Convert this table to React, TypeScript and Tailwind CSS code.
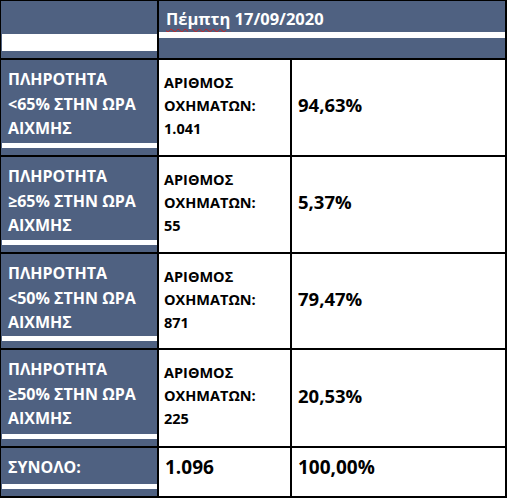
import React from 'react';

type Row = {
  label: string[];
  count: string;
  pct: string;
  h: string;
};

const rows: Row[] = [
  { label: ['ΠΛΗΡΟΤΗΤΑ', '<65% ΣΤΗΝ ΩΡΑ', 'ΑΙΧΜΗΣ'], count: '1.041', pct: '94,63%', h: 'h-[97px]' },
  { label: ['ΠΛΗΡΟΤΗΤΑ', '≥65% ΣΤΗΝ ΩΡΑ', 'ΑΙΧΜΗΣ'], count: '55', pct: '5,37%', h: 'h-[97px]' },
  { label: ['ΠΛΗΡΟΤΗΤΑ', '<50% ΣΤΗΝ ΩΡΑ', 'ΑΙΧΜΗΣ'], count: '871', pct: '79,47%', h: 'h-[96px]' },
  { label: ['ΠΛΗΡΟΤΗΤΑ', '≥50% ΣΤΗΝ ΩΡΑ', 'ΑΙΧΜΗΣ'], count: '225', pct: '20,53%', h: 'h-[98px]' },
];

function LabelCell({ children }: { children: React.ReactNode }) {
  return (
    <div className="w-[158px] border-r-2 border-black flex flex-col bg-[#4f6181]">
      <div className="flex-1 pl-[7px] pt-[7px] text-white font-bold text-[16px] leading-[24.5px]">{children}</div>
      <div className="pl-[1px]">
        <div className="h-[5px] bg-white" />
      </div>
      <div className="h-[7px]" />
    </div>
  );
}

export default function App() {
  return (
    <div className="w-[508px] h-[498px] bg-white font-['Open_Sans',sans-serif]">
      <div className="w-[507px] border-l border-t border-r-2 border-b-2 border-black flex flex-col">
        {/* header */}
        <div className="h-[59px] flex border-b-2 border-black">
          <div className="w-[158px] border-r-2 border-black flex flex-col bg-[#4f6181]">
            <div className="h-[33px]" />
            <div className="pl-[1px]">
              <div className="h-[17px] bg-white" />
            </div>
            <div className="h-[7px]" />
          </div>
          <div className="flex-1 flex flex-col">
            <div className="h-[31px] bg-[#4f6181] pl-[7px] pt-[8px] text-white font-bold text-[16.5px] leading-[20px]">
              <span className="underline decoration-wavy decoration-[#d02020] decoration-1 underline-offset-[3px]">Πέμπτη</span> 17/09/2020
            </div>
            <div className="h-[6px] bg-white" />
            <div className="flex-1 bg-[#4f6181]" />
          </div>
        </div>

        {rows.map((r) => (
          <div key={r.pct} className={`${r.h} flex border-b-2 border-black`}>
            <LabelCell>
              {r.label.map((l) => (
                <div key={l}>{l}</div>
              ))}
            </LabelCell>
            <div className="w-[133px] border-r-2 border-black pl-[5px] pt-[11px] text-black font-bold text-[14.5px] leading-[23px]">
              <div>ΑΡΙΘΜΟΣ</div>
              <div>ΟΧΗΜΑΤΩΝ:</div>
              <div>{r.count}</div>
            </div>
            <div className="flex-1 flex items-center pl-[6px] pb-[5px] text-black font-bold text-[18.5px]">{r.pct}</div>
          </div>
        ))}

        {/* total */}
        <div className="h-[48px] flex">
          <LabelCell>
            <div>ΣΥΝΟΛΟ:</div>
          </LabelCell>
          <div className="w-[133px] border-r-2 border-black pl-[6px] pt-[7px] text-black font-bold text-[19px] leading-[24px]">1.096</div>
          <div className="flex-1 pl-[6px] pt-[7px] text-black font-bold text-[19px] leading-[24px]">100,00%</div>
        </div>
      </div>
    </div>
  );
}
